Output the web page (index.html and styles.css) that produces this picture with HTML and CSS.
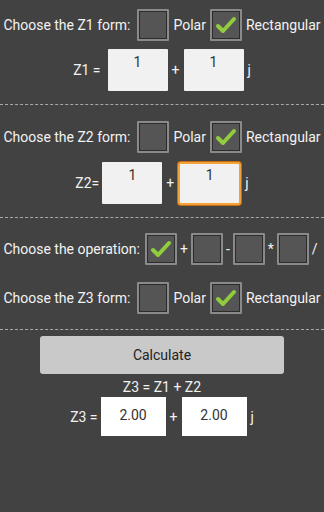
FILE: index.html
```html
<!DOCTYPE html>
<html lang="en">
<head>
  <meta charset="UTF-8" />
  <title>Complex Calculator</title>
  <link rel="stylesheet" href="styles.css">
</head>
<body>

<div class="section first">
  <div class="row">
    <span class="label">Choose the Z1 form:</span>
    <span class="check"></span>
    <span>Polar</span>
    <span class="check on"><svg viewBox="0 0 28 28"><polyline points="6,15 11,20 22,8" /></svg></span>
    <span>Rectangular</span>
  </div>
  <div class="row num-row">
    <span class="eq">Z1 =</span>
    <span class="field">1</span>
    <span class="op">+</span>
    <span class="field">1</span>
    <span class="j">j</span>
  </div>
</div>

<div class="section second">
  <div class="row">
    <span class="label">Choose the Z2 form:</span>
    <span class="check"></span>
    <span>Polar</span>
    <span class="check on"><svg viewBox="0 0 28 28"><polyline points="6,15 11,20 22,8" /></svg></span>
    <span>Rectangular</span>
  </div>
  <div class="row num-row">
    <span class="eq tight">Z2=</span>
    <span class="field">1</span>
    <span class="op">+</span>
    <span class="field focus">1</span>
    <span class="j">j</span>
  </div>
</div>

<div class="section third">
  <div class="row ops">
    <span class="label">Choose the operation:</span>
    <span class="check on"><svg viewBox="0 0 28 28"><polyline points="6,15 11,20 22,8" /></svg></span>
    <span class="sym">+</span>
    <span class="check"></span>
    <span class="sym">-</span>
    <span class="check"></span>
    <span class="sym">*</span>
    <span class="check"></span>
    <span class="sym">/</span>
  </div>
  <div class="row z3-form">
    <span class="label">Choose the Z3 form:</span>
    <span class="check"></span>
    <span>Polar</span>
    <span class="check on"><svg viewBox="0 0 28 28"><polyline points="6,15 11,20 22,8" /></svg></span>
    <span>Rectangular</span>
  </div>
</div>

<div class="result">
  <button class="calc-btn">Calculate</button>
  <div class="formula">Z3 = Z1 + Z2</div>
  <div class="row res-row">
    <span class="eq tight">Z3 =</span>
    <span class="out">2.00</span>
    <span class="op">+</span>
    <span class="out">2.00</span>
    <span class="j">j</span>
  </div>
</div>

</body>
</html>
```

FILE: styles.css
```css
body {
  margin: 0;
  background-color: #424242;
  color: #f2f2f2;
  font-family: Roboto, "Noto Sans", sans-serif;
  font-size: 14px;
  width: 324px;
  height: 512px;
  overflow: hidden;
}

.section {
  border-bottom: 1px dashed #a8a8a8;
}

.first {
  padding: 9px 0 13px;
}

.second {
  padding: 16px 0 13px;
}

.third {
  padding: 15px 0 15px;
}

.row {
  display: flex;
  align-items: center;
  justify-content: center;
  gap: 4px;
  height: 32px;
  white-space: nowrap;
}

.row > span {
  flex-shrink: 0;
}

.label {
  margin-right: 3px;
}

.check {
  width: 28px;
  height: 28px;
  background: #555;
  border: 2px solid #8a8a8a;
  box-shadow: inset 0 0 0 1px #2c2c2c;
  border-radius: 1px;
}

.check svg {
  width: 28px;
  height: 28px;
  display: block;
}

.check polyline {
  fill: none;
  stroke: #90cc3c;
  stroke-width: 4;
  stroke-linecap: round;
  stroke-linejoin: round;
}

.num-row {
  height: 42px;
  margin-top: 8px;
  gap: 0;
}

.second .num-row {
  margin-top: 9px;
}

.eq {
  margin-right: 7px;
}

.eq.tight {
  margin-right: 3px;
}

.field {
  width: 60px;
  height: 42px;
  box-sizing: border-box;
  background: #f1f1f1;
  color: #333;
  text-align: center;
  padding-top: 5px;
  border-radius: 1px;
}

.field.focus {
  width: 63px;
  height: 43px;
  border: 2px solid #f3a23a;
  box-shadow: 0 0 0 1px #c46c12;
  padding-top: 3px;
  border-radius: 3px;
}

.op {
  margin: 0 4px;
}

.j {
  margin-left: 4px;
}

.ops {
  gap: 0;
}

.ops .label {
  margin-right: 5px;
}

.ops .sym {
  margin: 0 3px;
}

.z3-form {
  margin-top: 17px;
}

.result {
  padding-top: 6px;
}

.calc-btn {
  display: block;
  margin: 0 auto;
  width: 244px;
  height: 38px;
  border: none;
  border-radius: 3px;
  background: #c9c9c9;
  color: #222;
  font-family: Roboto, "Noto Sans", sans-serif;
  font-size: 14px;
}

.formula {
  text-align: center;
  margin-top: 4px;
  line-height: 18px;
}

.res-row {
  height: 39px;
  margin-top: 1px;
  gap: 0;
}

.out {
  width: 65px;
  height: 39px;
  line-height: 37px;
  background: #fff;
  color: #333;
  text-align: center;
}
```
